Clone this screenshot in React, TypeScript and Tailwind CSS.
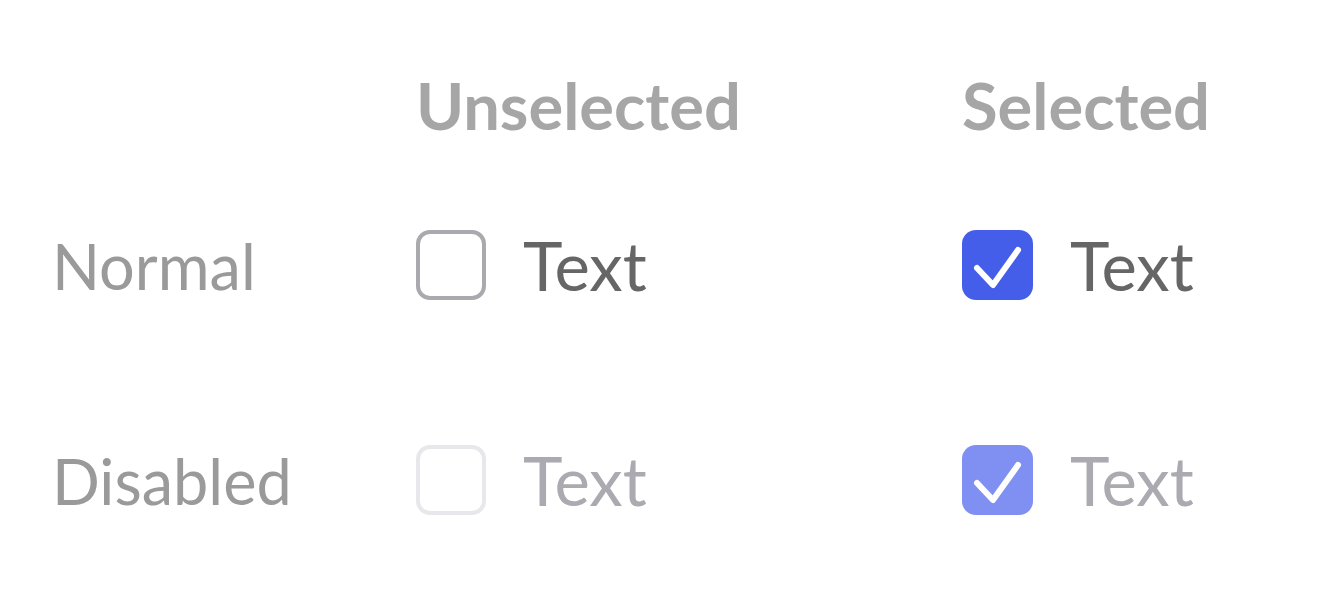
import React from 'react';

const font = { fontFamily: '"Lato", "Open Sans", sans-serif' };

const Check = ({ checked, disabled }: { checked: boolean; disabled?: boolean }) => {
  if (!checked) {
    return (
      <div
        className={
          'w-[70px] h-[70px] shrink-0 rounded-[14px] border-[4px] bg-white ' +
          (disabled ? 'border-[#e8e8ec]' : 'border-[#a9a9ae]')
        }
      />
    );
  }
  return (
    <div
      className={
        'w-[71px] h-[70px] shrink-0 rounded-[14px] flex items-center justify-center ' +
        (disabled ? 'bg-[#7f8ff2]' : 'bg-[#445ee9]')
      }
    >
      <svg width="71" height="70" viewBox="0 0 71 70" fill="none">
        <path
          d="M15 38 L31 55 L56 20"
          stroke="white"
          strokeWidth="6"
          strokeLinecap="round"
          strokeLinejoin="round"
        />
      </svg>
    </div>
  );
};

const Option = ({ checked, disabled }: { checked: boolean; disabled?: boolean }) => (
  <div className="flex items-center gap-[37px]">
    <Check checked={checked} disabled={disabled} />
    <span
      className={'text-[67px] leading-none ' + (disabled ? 'text-[#aaaab0]' : 'text-[#666666]')}
    >
      Text
    </span>
  </div>
);

export default function App() {
  return (
    <div className="w-[1332px] h-[606px] bg-white pl-[52px] pt-[50px]" style={font}>
      <div className="flex h-[110px] items-center">
        <div className="w-[364px]" />
        <div className="w-[546px] text-[65px] leading-none font-bold text-[#a6a6a6]">Unselected</div>
        <div className="text-[65px] leading-none font-bold text-[#a6a6a6]">Selected</div>
      </div>
      <div className="flex h-[210px] items-center">
        <div className="w-[364px] text-[63px] leading-none text-[#9a9a9a]">Normal</div>
        <div className="w-[546px]">
          <Option checked={false} />
        </div>
        <Option checked />
      </div>
      <div className="flex h-[220px] items-center">
        <div className="w-[364px] text-[63px] leading-none text-[#9a9a9a]">Disabled</div>
        <div className="w-[546px]">
          <Option checked={false} disabled />
        </div>
        <Option checked disabled />
      </div>
    </div>
  );
}
